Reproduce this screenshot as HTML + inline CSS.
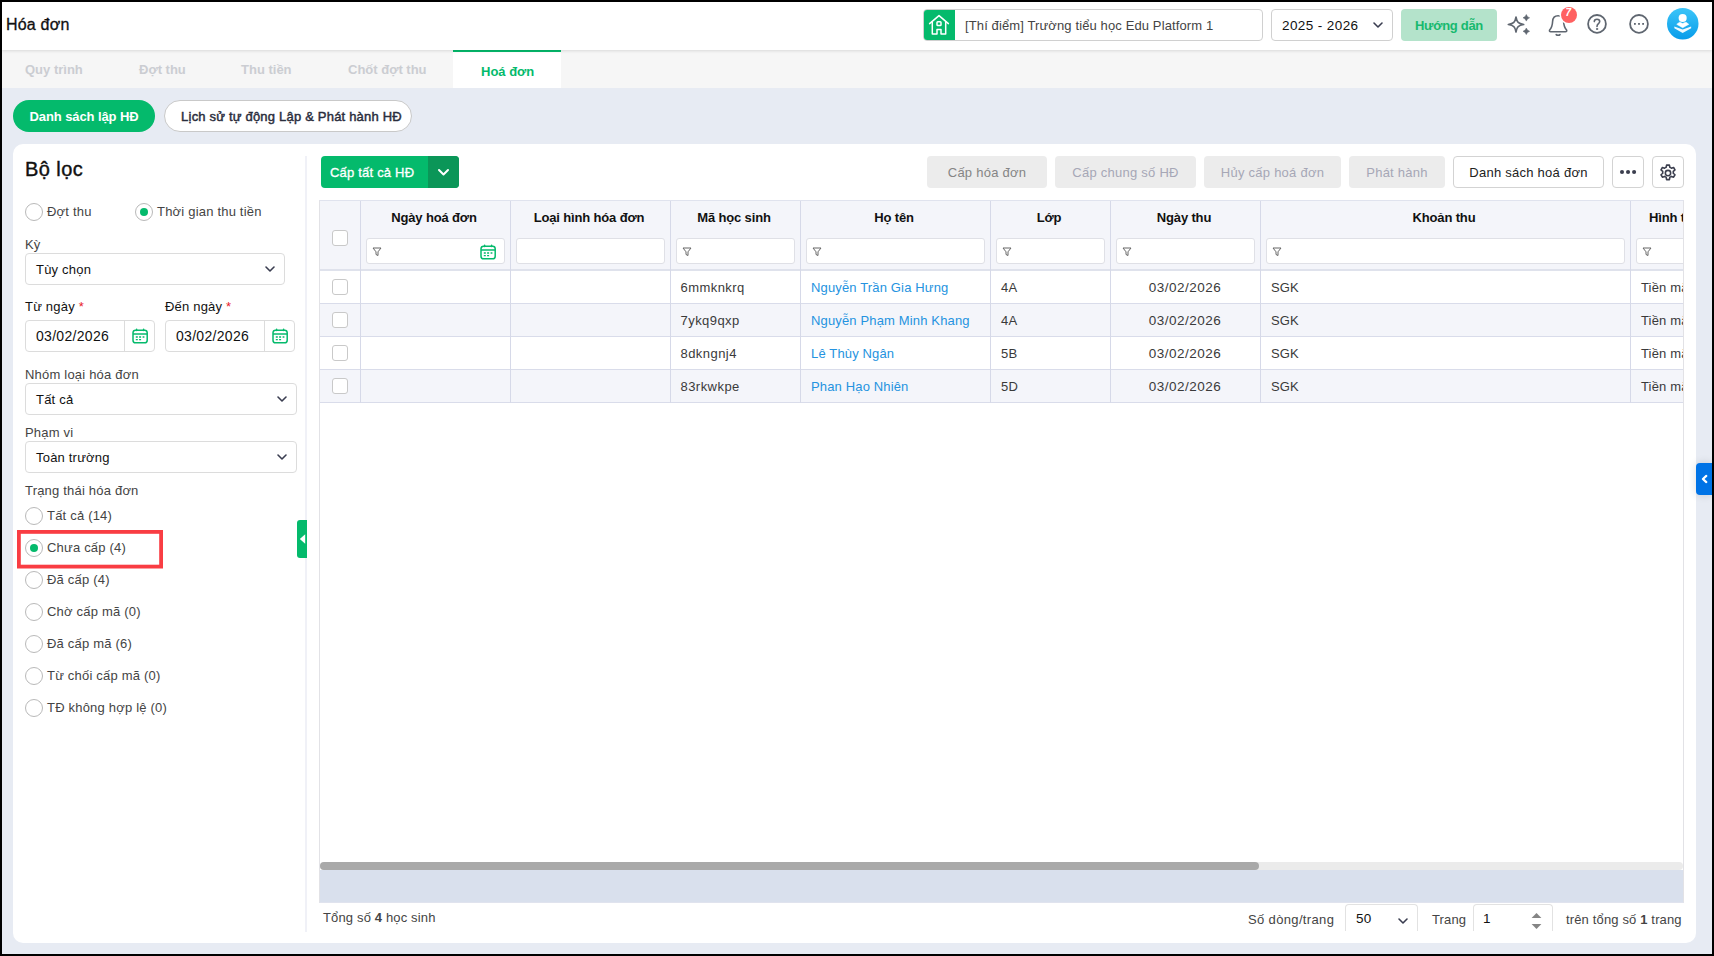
<!DOCTYPE html>
<html lang="vi">
<head>
<meta charset="utf-8">
<title>Hóa đơn</title>
<style>
*{box-sizing:border-box;margin:0;padding:0}
html,body{width:1714px;height:956px;overflow:hidden;background:#000}
body{font-family:"Liberation Sans",sans-serif;font-size:13px;color:#212121;position:relative}
.abs{position:absolute}
#app{position:absolute;left:2px;top:2px;width:1710px;height:952px;background:#e7ebf3;overflow:hidden}
/* header */
#hdr{position:absolute;left:0;top:0;width:1710px;height:48px;background:#fff;box-shadow:0 1px 3px rgba(0,0,0,.12);z-index:3}
#title{position:absolute;left:4px;top:13px;font-size:16px;line-height:20px;color:#111;-webkit-text-stroke:.3px #111;white-space:nowrap;letter-spacing:.2px}
.t{position:absolute;white-space:nowrap;line-height:16px}
/* tabs */
#tabs{position:absolute;left:0;top:48px;width:1710px;height:38px;background:#f6f6f6;z-index:1}
.tab{position:absolute;top:11.500px;font-weight:bold;font-size:13px;line-height:16px;color:#cbcdd2;white-space:nowrap}
#tabact{position:absolute;left:451px;top:0;width:108px;height:38px;background:#fff;border-top:2px solid #04ba6c}

/* header right */
#school{position:absolute;left:921px;top:7px;width:340px;height:32px;border:1px solid #d0d0d0;border-radius:4px;background:#fff;overflow:hidden}
#school .ic{position:absolute;left:-1px;top:-1px;width:32px;height:32px;background:#04ba6c}
#school .tx{position:absolute;left:41px;top:8px;font-size:13px;line-height:16px;color:#444;white-space:nowrap;letter-spacing:.12px}
#year{position:absolute;left:1269px;top:7px;width:122px;height:32px;border:1px solid #d0d0d0;border-radius:4px;background:#fff}
#year .tx{position:absolute;left:10px;top:8px;font-size:13.5px;line-height:16px;color:#111;white-space:nowrap;letter-spacing:.4px}
#guide{position:absolute;left:1399px;top:7px;width:96px;height:32px;border-radius:4px;background:#b4e3cb;color:#17b96e;font-weight:bold;font-size:13px;line-height:33px;text-align:center;letter-spacing:-.3px}

/* pills */
.pill{position:absolute;top:98px;height:32px;border-radius:16px;font-size:13px;line-height:34px;text-align:center;white-space:nowrap}
#pill1{left:11px;width:142px;background:#04ba6c;color:#fff;font-weight:bold;letter-spacing:-.1px}
#pill2{left:162px;width:248px;background:#fff;border:1px solid #c9c9c9;color:#2a2d3c;line-height:32px;-webkit-text-stroke:.45px #2a2d3c;letter-spacing:.2px;padding-left:7px}
/* panel */
#panel{position:absolute;left:11px;top:142px;width:1683px;height:799px;background:#fff;border-radius:10px}
#vsep{position:absolute;left:303.300px;top:154px;width:1.600px;height:776px;background:#f0f1f7}
#h1{position:absolute;left:23px;top:155px;font-size:20px;line-height:24px;color:#111;-webkit-text-stroke:.4px #111;white-space:nowrap;letter-spacing:.45px}
.lbl{position:absolute;font-size:13px;line-height:16px;color:#444;white-space:nowrap;letter-spacing:.2px}
.lblb{position:absolute;font-size:13px;line-height:16px;color:#111;white-space:nowrap;letter-spacing:.2px}
.req{color:#e8202a}
.radio{position:absolute;width:18px;height:18px;border-radius:9px;border:1px solid #b9b9b9;background:#fff}
.radio.on::after{content:"";position:absolute;left:4px;top:4px;width:8px;height:8px;border-radius:4px;background:#04ba6c}
.sel{position:absolute;height:32px;border:1px solid #dcdcdc;border-radius:4px;background:#fff}
.sel .tx{position:absolute;left:10px;top:8px;font-size:13px;line-height:16px;color:#111;white-space:nowrap;letter-spacing:.2px}
.sel svg.ch{position:absolute;right:8px;top:11px}
.date{position:absolute;width:130px;height:32px;border:1px solid #dcdcdc;border-radius:4px;background:#fff}
.date .tx{position:absolute;left:10px;top:6.700px;font-size:14px;line-height:16px;color:#111;white-space:nowrap;letter-spacing:.3px}
.date .sp{position:absolute;left:98px;top:0;width:1px;height:30px;background:#dcdcdc}
.date svg{position:absolute;left:106px;top:7px}
#redbox{position:absolute;left:15px;top:528.300px;width:146px;height:38.500px}
#ltab{position:absolute;left:295px;top:518px;width:10px;height:38px;background:#04ba6c;border-radius:3px 0 0 3px}

/* toolbar */
#bmain{position:absolute;left:319px;top:154px;width:138px;height:32px;border-radius:4px;background:#04ba6c;overflow:hidden}
#bmain .tx{position:absolute;left:9px;top:8.700px;font-size:13px;line-height:16px;color:#fff;-webkit-text-stroke:.3px #fff;white-space:nowrap;letter-spacing:.2px}
#bmain .dd{position:absolute;left:107px;top:0;width:31px;height:32px;background:#0b9658}
.bdis{position:absolute;top:154px;height:32px;border-radius:4px;background:#ececec;color:#a6a7b6;font-size:13px;line-height:33px;text-align:center;white-space:nowrap;letter-spacing:.25px}
.bout{position:absolute;top:154px;height:32px;border-radius:4px;background:#fff;border:1px solid #d3d3d3;color:#222;font-size:13px;line-height:31px;text-align:center;white-space:nowrap;letter-spacing:.25px}
/* grid */
#grid{position:absolute;left:317px;top:198px;width:1365px;height:703px;border:1px solid #e0e3ee;border-left-color:#e2e2e6;border-right-color:#e2e2e6;background:#fff;overflow:hidden}
#ghead{position:absolute;left:0;top:0;width:1500px;height:70px;background:#f4f5fa;border-bottom:2px solid #dfe2ec}
.vl{position:absolute;top:0;width:1px;background:#d6d9e8}
.hc{position:absolute;top:9px;font-weight:bold;font-size:13px;line-height:16px;color:#111;text-align:center;white-space:nowrap;letter-spacing:-.15px;padding-right:2px}
.fb{position:absolute;top:37px;height:26px;border:1px solid #dfe0e6;border-radius:3px;background:#fff}
.fb svg.fi{position:absolute;left:5px;top:8px}
.row{position:absolute;left:0;width:1500px;height:33px;border-bottom:1px solid #d9dcea}
.row.alt{background:#f4f5fa}
.c{position:absolute;top:9px;font-size:13px;line-height:16px;color:#3a3a3a;white-space:nowrap;letter-spacing:.15px}
.c.lk{color:#2593e0}
.cb{position:absolute;left:12px;width:16px;height:16px;border:1px solid #c9c9c9;border-radius:3px;background:#fff}
#hsb{position:absolute;left:0;top:661px;width:1363px;height:8px;background:#ebebeb;border-radius:4px}
#hsb div{position:absolute;left:0;top:0;width:939px;height:8px;border-radius:4px;background:#a9a9a9}
#gfoot{position:absolute;left:0;top:669px;width:1365px;height:34px;background:#d9e0ed}
/* paging */
.pg{position:absolute;top:909.500px;font-size:13px;line-height:16px;color:#444;white-space:nowrap;letter-spacing:.15px}
</style>
</head>
<body>
<div id="app">
  <div id="hdr">
    <div id="title">Hóa đơn</div>
    <div id="school">
      <div class="ic"><svg width="32" height="32" viewBox="0 0 32 32" fill="none" stroke="#fff" stroke-width="1.5" stroke-linejoin="round" stroke-linecap="round"><path d="M6.600 14.600 L16 6.600 L25.400 14.600"/><path d="M9.300 12.800 V25.100 H14 V20.400 H18 V25.100 H22.700 V12.800"/><rect x="14" y="12.800" width="4" height="3.800" rx=".8"/></svg></div>
      <div class="tx">[Thí điểm] Trường tiểu học Edu Platform 1</div>
    </div>
    <div id="year"><div class="tx">2025 - 2026</div>
      <svg class="abs" style="left:100px;top:11px" width="12" height="8" viewBox="0 0 12 8" fill="none" stroke="#3a3d50" stroke-width="1.6" stroke-linecap="round" stroke-linejoin="round"><path d="M2 2 L6 6 L10 2"/></svg>
    </div>
    <div id="guide">Hướng dẫn</div>
    <svg class="abs" style="left:1504px;top:10px" width="28" height="28" viewBox="0 0 28 28" fill="none" stroke="#5f6670" stroke-width="1.6" stroke-linejoin="round"><path d="M10 5 C10.900 10.200 12.300 11.600 17.700 12.500 C12.300 13.400 10.900 14.800 10 20 C9.100 14.800 7.700 13.400 2.300 12.500 C7.700 11.600 9.100 10.200 10 5Z"/><path d="M20.3 2.50 Q21.03 5.07 23.60 5.8 Q21.03 6.53 20.3 9.10 Q19.57 6.53 17.00 5.8 Q19.57 5.07 20.3 2.50Z" fill="#5f6670" stroke-width=".5"/><path d="M20.3 16.00 Q21.03 18.57 23.60 19.3 Q21.03 20.03 20.3 22.60 Q19.57 20.03 17.00 19.3 Q19.57 18.57 20.3 16.00Z" fill="#5f6670" stroke-width=".5"/></svg>
    <svg class="abs" style="left:1543px;top:10px" width="28" height="28" viewBox="0 0 28 28" fill="none" stroke="#5f6670" stroke-width="1.6" stroke-linecap="round" stroke-linejoin="round"><path d="M4.600 18 C6.800 15.800 7.400 13.500 7.600 9.500 C7.800 5.600 10 3.800 13.100 3.800 C16.200 3.800 18.400 5.600 18.600 9.500 C18.800 13.500 19.400 15.800 21.600 18 C22 19.100 21.500 19.700 20.500 19.700 H5.700 C4.700 19.700 4.200 19.100 4.600 18Z"/><path d="M11.200 22.600 C12 23.400 14.200 23.400 15 22.600"/></svg>
    <div class="abs" style="left:1559px;top:5px;width:16px;height:16px;border-radius:8px;background:#ff6161;box-shadow:0 0 0 1.5px #fff"></div>
    <div class="abs" style="left:1563.5px;top:6px;font-size:10px;line-height:10px;color:#fff;font-style:italic;font-weight:bold">7</div>
    <svg class="abs" style="left:1583px;top:10px" width="28" height="28" viewBox="0 0 28 28" fill="none" stroke="#5f6670" stroke-width="1.8" stroke-linecap="round"><circle cx="12" cy="11.900" r="8.900"/><path d="M9.300 9.600 C9.300 6.400 14.700 6.400 14.700 9.600 C14.700 11.800 12 11.600 12 14.400" stroke-width="1.6"/><circle cx="12" cy="17" r=".7" fill="#5f6670" stroke-width=".8"/></svg>
    <svg class="abs" style="left:1624px;top:10px" width="28" height="28" viewBox="0 0 28 28" fill="none" stroke="#5f6670" stroke-width="1.8"><circle cx="13" cy="11.900" r="8.900"/><rect x="8" y="11" width="1.800" height="1.800" fill="#5f6670" stroke="none"/><rect x="12.100" y="11" width="1.800" height="1.800" fill="#5f6670" stroke="none"/><rect x="16.200" y="11" width="1.800" height="1.800" fill="#5f6670" stroke="none"/></svg>
    <svg class="abs" style="left:1665.250px;top:6px" width="32" height="32" viewBox="0 0 32 32"><defs><linearGradient id="ag" x1="0" y1="0" x2="0" y2="1"><stop offset="0" stop-color="#3cc5f8"/><stop offset="1" stop-color="#089cea"/></linearGradient></defs><circle cx="15.750" cy="15.750" r="15.750" fill="url(#ag)"/><circle cx="15.650" cy="10" r="4.050" fill="#fff"/><path d="M9.750 16.300 L12.650 14.200 L15.650 15.500 L18.950 14.200 L21.750 16.300 L15.650 19.700Z" fill="#fff" stroke="#fff" stroke-width=".6" stroke-linejoin="round"/><path d="M7.350 18.400 L15.650 21.600 L24.150 18.400 L24.150 20.300 L15.650 25 L7.350 20.300Z" fill="#fff" opacity=".93"/></svg>

  </div>
  <div id="tabs">
    <div class="tab" style="left:23px">Quy trình</div>
    <div class="tab" style="left:137px">Đợt thu</div>
    <div class="tab" style="left:239px">Thu tiền</div>
    <div class="tab" style="left:346px">Chốt đợt thu</div>
    <div id="tabact"><div class="tab" style="left:28px;top:11.500px;color:#04ba6c">Hoá đơn</div></div>
  </div>

  <div class="pill" id="pill1">Danh sách lập HĐ</div>
  <div class="pill" id="pill2">Lịch sử tự động Lập &amp; Phát hành HĐ</div>
  <div id="panel"></div>
  <div id="vsep"></div>
  <div id="h1">Bộ lọc</div>
  <div class="radio" style="left:23px;top:201px"></div><div class="lbl" style="left:45px;top:202px">Đợt thu</div>
  <div class="radio on" style="left:133px;top:201px"></div><div class="lbl" style="left:155px;top:202px">Thời gian thu tiền</div>
  <div class="lbl" style="left:23px;top:235px">Kỳ</div>
  <div class="sel" style="left:23px;top:251px;width:260px"><div class="tx">Tùy chọn</div><svg class="ch" width="12" height="8" viewBox="0 0 12 8" fill="none" stroke="#3a3d50" stroke-width="1.6" stroke-linecap="round" stroke-linejoin="round"><path d="M2 2 L6 6 L10 2"/></svg></div>
  <div class="lblb" style="left:23px;top:297px">Từ ngày <span class="req">*</span></div>
  <div class="lblb" style="left:163px;top:297px">Đến ngày <span class="req">*</span></div>
  <div class="date" style="left:23px;top:318px"><div class="tx">03/02/2026</div><div class="sp"></div><svg width="16" height="16" viewBox="0 0 16 16" fill="none" stroke="#04ba6c" stroke-width="1.5"><rect x="1" y="2.200" width="14.200" height="12.600" rx="2.600"/><path d="M1 6 H15.200"/><path d="M4.600 1.200 V2.600 M11.600 1.200 V2.600" stroke-linecap="round"/><path d="M3.800 9 H5.800 M7.100 9 H9.100 M10.600 9 H12.400 M3.800 11.600 H5.800 M7.100 11.600 H9.100" stroke-width="1.300"/></svg></div>
  <div class="date" style="left:163px;top:318px"><div class="tx">03/02/2026</div><div class="sp"></div><svg width="16" height="16" viewBox="0 0 16 16" fill="none" stroke="#04ba6c" stroke-width="1.5"><rect x="1" y="2.200" width="14.200" height="12.600" rx="2.600"/><path d="M1 6 H15.200"/><path d="M4.600 1.200 V2.600 M11.600 1.200 V2.600" stroke-linecap="round"/><path d="M3.800 9 H5.800 M7.100 9 H9.100 M10.600 9 H12.400 M3.800 11.600 H5.800 M7.100 11.600 H9.100" stroke-width="1.300"/></svg></div>
  <div class="lbl" style="left:23px;top:365px">Nhóm loại hóa đơn</div>
  <div class="sel" style="left:23px;top:381px;width:272px"><div class="tx">Tất cả</div><svg class="ch" width="12" height="8" viewBox="0 0 12 8" fill="none" stroke="#3a3d50" stroke-width="1.6" stroke-linecap="round" stroke-linejoin="round"><path d="M2 2 L6 6 L10 2"/></svg></div>
  <div class="lbl" style="left:23px;top:423px">Phạm vi</div>
  <div class="sel" style="left:23px;top:439px;width:272px"><div class="tx">Toàn trường</div><svg class="ch" width="12" height="8" viewBox="0 0 12 8" fill="none" stroke="#3a3d50" stroke-width="1.6" stroke-linecap="round" stroke-linejoin="round"><path d="M2 2 L6 6 L10 2"/></svg></div>
  <div class="lbl" style="left:23px;top:481px">Trạng thái hóa đơn</div>
  <div class="radio" style="left:23px;top:505px"></div><div class="lbl" style="left:45px;top:505.5px">Tất cả (14)</div>
  <div class="radio on" style="left:23px;top:537px"></div><div class="lbl" style="left:45px;top:537.5px">Chưa cấp (4)</div>
  <div class="radio" style="left:23px;top:569px"></div><div class="lbl" style="left:45px;top:569.5px">Đã cấp (4)</div>
  <div class="radio" style="left:23px;top:601px"></div><div class="lbl" style="left:45px;top:601.5px">Chờ cấp mã (0)</div>
  <div class="radio" style="left:23px;top:633px"></div><div class="lbl" style="left:45px;top:633.5px">Đã cấp mã (6)</div>
  <div class="radio" style="left:23px;top:665px"></div><div class="lbl" style="left:45px;top:665.5px">Từ chối cấp mã (0)</div>
  <div class="radio" style="left:23px;top:697px"></div><div class="lbl" style="left:45px;top:697.5px">TĐ không hợp lệ (0)</div>
  <div id="redbox"><svg width="146" height="38.500" viewBox="0 0 146 38.500" style="display:block"><rect x="1.900" y="1.900" width="142.200" height="34.700" fill="none" stroke="#f93d43" stroke-width="3.800"/></svg></div>
  <div id="ltab"><svg width="10" height="38" viewBox="0 0 10 38"><path d="M8.200 14.300 L2.800 19 L8.200 23.700Z" fill="#fff"/></svg></div>

  <div id="bmain"><div class="tx">Cấp tất cả HĐ</div><div class="dd"><svg width="31" height="32" viewBox="0 0 31 32" fill="none" stroke="#fff" stroke-width="2" stroke-linecap="round" stroke-linejoin="round"><path d="M11 14 L15.500 18.500 L20 14"/></svg></div></div>
  <div class="bdis" style="left:925px;width:120px;color:#858585">Cấp hóa đơn</div>
  <div class="bdis" style="left:1053px;width:141px">Cấp chung số HĐ</div>
  <div class="bdis" style="left:1202px;width:137px">Hủy cấp hoá đơn</div>
  <div class="bdis" style="left:1347px;width:96px">Phát hành</div>
  <div class="bout" style="left:1451px;width:151px">Danh sách hoá đơn</div>
  <div class="bout" style="left:1610px;width:32px"><svg class="abs" style="left:4px;top:10px" width="22" height="10" viewBox="0 0 22 10" fill="#3b3e4e"><circle cx="5" cy="5" r="2.050"/><circle cx="11.050" cy="5" r="2.050"/><circle cx="17.100" cy="5" r="2.050"/></svg></div>
  <div class="bout" style="left:1650px;width:32px"><svg class="abs" style="left:5px;top:5.600px" width="20" height="20" viewBox="0 0 24 24" fill="none" stroke="#3b3e4e" stroke-width="1.9" stroke-linejoin="round"><circle cx="12" cy="12" r="3.200"/><path d="M10.300 2.500 h3.400 l.5 2.700 a7.500 7.500 0 0 1 1.900 1.100 l2.600 -.9 l1.700 2.900 l-2.100 1.800 a7.500 7.500 0 0 1 0 2.200 l2.100 1.800 l-1.700 2.900 l-2.600 -.9 a7.500 7.500 0 0 1 -1.900 1.100 l-.5 2.700 h-3.400 l-.5 -2.700 a7.500 7.500 0 0 1 -1.900 -1.100 l-2.600 .9 l-1.700 -2.900 l2.100 -1.800 a7.500 7.500 0 0 1 0 -2.200 l-2.100 -1.800 l1.700 -2.900 l2.600 .9 a7.500 7.500 0 0 1 1.900 -1.100 z"/></svg></div>
<div id="grid"><div id="ghead"><div class="hc" style="left:40px;width:150px">Ngày hoá đơn</div><div class="fb" style="left:46px;width:139px"><svg class="fi" width="10" height="10" viewBox="0 0 10 10" fill="none" stroke="#666" stroke-width="1" stroke-linejoin="round"><path d="M1 1 H9 L6 4.800 V8.500 L4 7.500 V4.800 Z"/></svg><svg class="abs" style="left:113px;top:4.500px" width="16" height="16" viewBox="0 0 16 16" fill="none" stroke="#04ba6c" stroke-width="1.5"><rect x="1" y="2.200" width="14.200" height="12.600" rx="2.600"/><path d="M1 6 H15.200"/><path d="M4.600 1.200 V2.600 M11.600 1.200 V2.600" stroke-linecap="round"/><path d="M3.800 9 H5.800 M7.100 9 H9.100 M10.600 9 H12.400 M3.800 11.600 H5.800 M7.100 11.600 H9.100" stroke-width="1.300"/></svg></div><div class="hc" style="left:190px;width:160px">Loại hình hóa đơn</div><div class="fb" style="left:196px;width:149px"></div><div class="hc" style="left:350px;width:130px">Mã học sinh</div><div class="fb" style="left:356px;width:119px"><svg class="fi" width="10" height="10" viewBox="0 0 10 10" fill="none" stroke="#666" stroke-width="1" stroke-linejoin="round"><path d="M1 1 H9 L6 4.800 V8.500 L4 7.500 V4.800 Z"/></svg></div><div class="hc" style="left:480px;width:190px">Họ tên</div><div class="fb" style="left:486px;width:179px"><svg class="fi" width="10" height="10" viewBox="0 0 10 10" fill="none" stroke="#666" stroke-width="1" stroke-linejoin="round"><path d="M1 1 H9 L6 4.800 V8.500 L4 7.500 V4.800 Z"/></svg></div><div class="hc" style="left:670px;width:120px">Lớp</div><div class="fb" style="left:676px;width:109px"><svg class="fi" width="10" height="10" viewBox="0 0 10 10" fill="none" stroke="#666" stroke-width="1" stroke-linejoin="round"><path d="M1 1 H9 L6 4.800 V8.500 L4 7.500 V4.800 Z"/></svg></div><div class="hc" style="left:790px;width:150px">Ngày thu</div><div class="fb" style="left:796px;width:139px"><svg class="fi" width="10" height="10" viewBox="0 0 10 10" fill="none" stroke="#666" stroke-width="1" stroke-linejoin="round"><path d="M1 1 H9 L6 4.800 V8.500 L4 7.500 V4.800 Z"/></svg></div><div class="hc" style="left:940px;width:370px">Khoản thu</div><div class="fb" style="left:946px;width:359px"><svg class="fi" width="10" height="10" viewBox="0 0 10 10" fill="none" stroke="#666" stroke-width="1" stroke-linejoin="round"><path d="M1 1 H9 L6 4.800 V8.500 L4 7.500 V4.800 Z"/></svg></div><div class="hc" style="left:1329px">Hình thức thu</div><div class="fb" style="left:1316px;width:119px"><svg class="fi" width="10" height="10" viewBox="0 0 10 10" fill="none" stroke="#666" stroke-width="1" stroke-linejoin="round"><path d="M1 1 H9 L6 4.800 V8.500 L4 7.500 V4.800 Z"/></svg></div><div class="cb" style="top:29px"></div></div><div class="row" style="top:70px"><div class="cb" style="top:8px"></div><div class="c" style="left:361px;letter-spacing:.45px;margin-left:-.5px">6mmknkrq</div><div class="c lk" style="left:491px">Nguyễn Trần Gia Hưng</div><div class="c" style="left:681px">4A</div><div class="c" style="left:790px;width:150px;text-align:center;font-size:13.5px;letter-spacing:.5px">03/02/2026</div><div class="c" style="left:951px">SGK</div><div class="c" style="left:1321px">Tiền mặt</div></div><div class="row alt" style="top:103px"><div class="cb" style="top:8px"></div><div class="c" style="left:361px;letter-spacing:.45px;margin-left:-.5px">7ykq9qxp</div><div class="c lk" style="left:491px">Nguyễn Phạm Minh Khang</div><div class="c" style="left:681px">4A</div><div class="c" style="left:790px;width:150px;text-align:center;font-size:13.5px;letter-spacing:.5px">03/02/2026</div><div class="c" style="left:951px">SGK</div><div class="c" style="left:1321px">Tiền mặt</div></div><div class="row" style="top:136px"><div class="cb" style="top:8px"></div><div class="c" style="left:361px;letter-spacing:.45px;margin-left:-.5px">8dkngnj4</div><div class="c lk" style="left:491px">Lê Thùy Ngân</div><div class="c" style="left:681px">5B</div><div class="c" style="left:790px;width:150px;text-align:center;font-size:13.5px;letter-spacing:.5px">03/02/2026</div><div class="c" style="left:951px">SGK</div><div class="c" style="left:1321px">Tiền mặt</div></div><div class="row alt" style="top:169px"><div class="cb" style="top:8px"></div><div class="c" style="left:361px;letter-spacing:.45px;margin-left:-.5px">83rkwkpe</div><div class="c lk" style="left:491px">Phan Hạo Nhiên</div><div class="c" style="left:681px">5D</div><div class="c" style="left:790px;width:150px;text-align:center;font-size:13.5px;letter-spacing:.5px">03/02/2026</div><div class="c" style="left:951px">SGK</div><div class="c" style="left:1321px">Tiền mặt</div></div><div class="vl" style="left:40px;height:202px"></div><div class="vl" style="left:190px;height:202px"></div><div class="vl" style="left:350px;height:202px"></div><div class="vl" style="left:480px;height:202px"></div><div class="vl" style="left:670px;height:202px"></div><div class="vl" style="left:790px;height:202px"></div><div class="vl" style="left:940px;height:202px"></div><div class="vl" style="left:1310px;height:202px"></div><div id="hsb"><div></div></div><div id="gfoot"></div></div>
  <div class="pg" style="left:321px;top:908px">Tổng số <b>4</b> học sinh</div>
  <div class="pg" style="left:1246px;letter-spacing:.35px">Số dòng/trang</div>
  <div class="abs" style="left:1343px;top:902px;width:73px;height:27px;border:1px solid #e2e2e2;border-bottom:none;border-radius:4px 4px 0 0"><div class="t" style="left:10px;top:6px;font-size:13.5px;color:#111;letter-spacing:.3px">50</div><svg class="abs" style="left:51px;top:11.500px" width="12" height="8" viewBox="0 0 12 8" fill="none" stroke="#3a3d50" stroke-width="1.600" stroke-linecap="round" stroke-linejoin="round"><path d="M2 2 L6 6 L10 2"/></svg></div>
  <div class="pg" style="left:1430px">Trang</div>
  <div class="abs" style="left:1471px;top:902px;width:80px;height:27px;border:1px solid #e2e2e2;border-bottom:none;border-radius:4px 4px 0 0"><div class="t" style="left:9px;top:6px;font-size:13.5px;color:#111">1</div><svg class="abs" style="left:57px;top:6.500px" width="11" height="18" viewBox="0 0 11 18" fill="#858585"><path d="M.6 6 L5.500 1 L10.400 6Z"/><path d="M.6 12 L5.500 17 L10.400 12Z"/></svg></div>
  <div class="pg" style="left:1564px">trên tổng số <b>1</b> trang</div>
  <div class="abs" style="left:1694px;top:461px;width:16px;height:32px;background:#0073e6;border-radius:4px 0 0 4px;box-shadow:0 0 8px rgba(0,0,0,.14)"><svg width="16" height="32" viewBox="0 0 16 32" fill="none" stroke="#fff" stroke-width="2.200" stroke-linecap="round" stroke-linejoin="round"><path d="M10.300 12.900 L6.900 16 L10.300 19.100"/></svg></div>
</div>
</body>
</html>
